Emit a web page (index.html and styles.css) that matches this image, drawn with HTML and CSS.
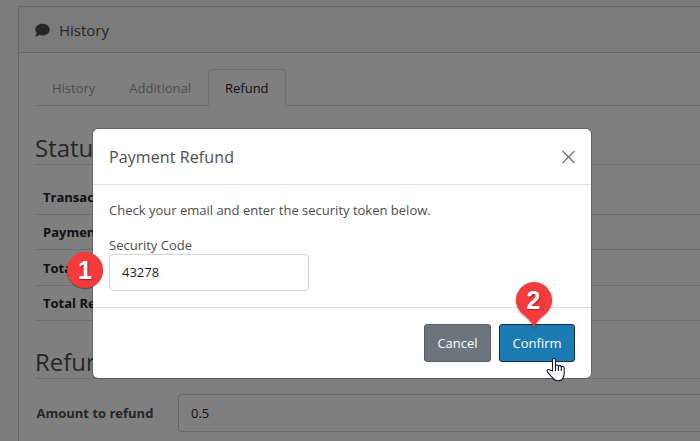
FILE: index.html
```html
<!DOCTYPE html>
<html lang="en">
<head>
<meta charset="utf-8">
<title>Payment Refund</title>
<link rel="stylesheet" href="styles.css">
</head>
<body>
<main class="card">
  <header class="card-header">
    <svg class="comment" viewBox="0 0 16 14"><path d="M8 .3C3.6.3.3 3 .3 6.5c0 1.500.6 2.800 1.500 3.800-.2 1.100-.8 2.100-1.700 3-.2.2 0 .5.3.5 1.800 0 3.200-.6 4.200-1.400 1 .3 2.200.5 3.400.5 4.300 0 7.700-2.800 7.700-6.400S12.300.3 8 .3z"/></svg>
    <span>History</span>
  </header>
  <div class="card-body">
    <nav class="tabs">
      <a class="tab">History</a>
      <a class="tab">Additional</a>
      <a class="tab active">Refund</a>
    </nav>
    <h2 class="section status">Status</h2>
    <div class="rows">
      <div class="row">Transaction</div>
      <div class="row">Payment</div>
      <div class="row tall">Total</div>
      <div class="row">Total Refund</div>
    </div>
    <h2 class="section refund">Refund</h2>
    <div class="field">
      <label>Amount to refund</label>
      <div class="amount">0.5</div>
    </div>
  </div>
</main>
<div class="backdrop">
  <section class="modal">
    <header class="modal-header">
      <h1>Payment Refund</h1>
      <svg class="close" viewBox="0 0 14 14"><path d="M1 1l12 12M13 1L1 13"/></svg>
    </header>
    <div class="modal-body">
      <p>Check your email and enter the security token below.</p>
      <label>Security Code</label>
      <div class="code">43278</div>
    </div>
    <footer class="modal-footer">
      <button class="btn cancel">Cancel</button>
      <button class="btn confirm">Confirm</button>
    </footer>
  </section>
</div>
<div class="marker one">1</div>
<div class="marker two"><svg viewBox="0 0 38 48"><path d="M19 1a18 18 0 0 1 13 30.500C27 36 22 39 19 47C16 39 11 36 6 31.500A18 18 0 0 1 19 1z"/></svg><span>2</span></div>
<svg class="pointer" viewBox="0 0 20 25"><path d="M6.500 14V3.200c0-2.200 3-2.200 3 0V9c.4-1.400 2.700-1.300 2.900.3.600-1.200 2.700-.9 2.900.6.800-.9 2.900-.5 2.900 1.300v5.300c0 2.200-.9 3.300-1.300 4.700-1.200 2.300-3.600 2.700-5.700 2.500-2.600-.2-4-1.500-5-3.400L1.400 14.800c-1-1.700 1-3 2.600-1.800z"/><path d="M9.500 9v5M12.400 9.300V14M15.300 10v4"/></svg>
</body>
</html>
```
FILE: styles.css
```css
* { box-sizing: border-box; }
body {
  margin: 0;
  width: 700px;
  height: 441px;
  overflow: hidden;
  position: relative;
  display: flow-root;
  background: #f7f7f7;
  color: #4d4d4d;
  font: 13px/20px "Open Sans", "Noto Sans", sans-serif;
}
h1, h2, p { margin: 0; font-weight: 400; }
.card {
  margin: 6px 0 0 18px;
  height: 435px;
  border: 1px solid #cdcdcd;
  border-width: 1px 0 0 1px;
  background: #fff;
}
.card-header {
  height: 46px;
  padding: 1px 16px 0;
  display: flex;
  align-items: center;
  gap: 9px;
  border-bottom: 1px solid #cdcdcd;
  background: #f7f7f7;
  font-size: 15px;
}
.comment { width: 15px; height: 14px; fill: #4d4d4d; }
.card-body { padding: 16px 0 0 16px; }
.tabs { display: flex; height: 37px; border-bottom: 1px solid #dedede; }
.tab {
  height: 37px;
  padding: 8px 16px 0;
  border: 1px solid transparent;
  color: #999;
}
.tab.active {
  border-color: #dedede;
  border-bottom-color: #fff;
  border-radius: 4px 4px 0 0;
  background: #fff;
  color: #222;
}
.section {
  font-size: 24px;
  line-height: 30px;
  border-bottom: 1px solid #dedede;
}
.status { margin-top: 27px; height: 32px; }
.rows { margin-top: 15px; color: #212529; font-weight: 700; }
.row { height: 35px; padding: 7px 8px; border-bottom: 1px solid #dedede; }
.row.tall { height: 36px; padding-top: 8px; }
.refund { margin-top: 26px; height: 32px; }
.field { display: flex; align-items: center; margin-top: 15px; }
.field label { width: 143px; padding-left: 1.5px; font-weight: 700; }
.amount {
  flex: 1;
  height: 38px;
  padding: 8px 12px;
  border: 1px solid #cdcdcd;
  border-right: 0;
  border-radius: 4px 0 0 4px;
  color: #222;
}
.backdrop {
  position: absolute;
  inset: 0;
  padding: 129px 0 0 93px;
  background: rgba(0, 0, 0, .5);
}
.modal {
  width: 498px;
  height: 249px;
  border-radius: 5px;
  background: #fff;
  box-shadow: 0 0 0 1px rgba(0, 0, 0, .2);
}
.modal-header {
  height: 56px;
  padding: 0 15px 0 16px;
  display: flex;
  align-items: center;
  justify-content: space-between;
  border-bottom: 1px solid #dee2e6;
}
.modal-header h1 { font-size: 16px; letter-spacing: .1px; }
.close { width: 15px; height: 14px; fill: none; stroke: #777; stroke-width: 1.4; }
.modal-body { height: 122px; padding: 15px 16px 0; }
.modal-body p { margin-bottom: 16px; }
.modal-body label { display: block; height: 18px; line-height: 18px; }
.code {
  width: 200px;
  height: 37px;
  padding: 7px 12px;
  border: 1px solid #ced4da;
  border-radius: 4px;
  color: #222;
}
.modal-footer {
  height: 71px;
  padding: 16px;
  display: flex;
  justify-content: flex-end;
  gap: 8px;
  border-top: 1px solid #dee2e6;
}
.btn {
  height: 38px;
  padding: 0;
  border: 1px solid;
  border-radius: 3px;
  font: inherit;
  color: #fff;
}
.cancel { width: 67px; background: #6c757d; border-color: #545b62; }
.confirm { width: 76px; background: #1b7bb3; border-color: #102f43; }
.marker {
  position: absolute;
  color: #fff;
  text-align: center;
  font: 700 25px/36px "Liberation Sans", sans-serif;
  text-shadow: 1px 1px 1px rgba(80, 0, 0, .45);
}
.one {
  left: 67px;
  top: 252px;
  width: 36px;
  height: 36px;
  border-radius: 50%;
  background: #f33a3c;
  box-shadow: 0 1px 1px rgba(0, 0, 0, .4);
}
.two { left: 514.5px; top: 281px; width: 38px; height: 48px; }
.two svg { position: absolute; inset: 0; fill: #f33a3c; filter: drop-shadow(0 1px 1px rgba(0, 0, 0, .35)); }
.two span { position: relative; top: 1px; }
.pointer {
  position: absolute;
  left: 546px;
  top: 357px;
  width: 20px;
  height: 25px;
  fill: #fff;
  stroke: #14142b;
  stroke-width: 1.1;
  stroke-linejoin: round;
}
```
